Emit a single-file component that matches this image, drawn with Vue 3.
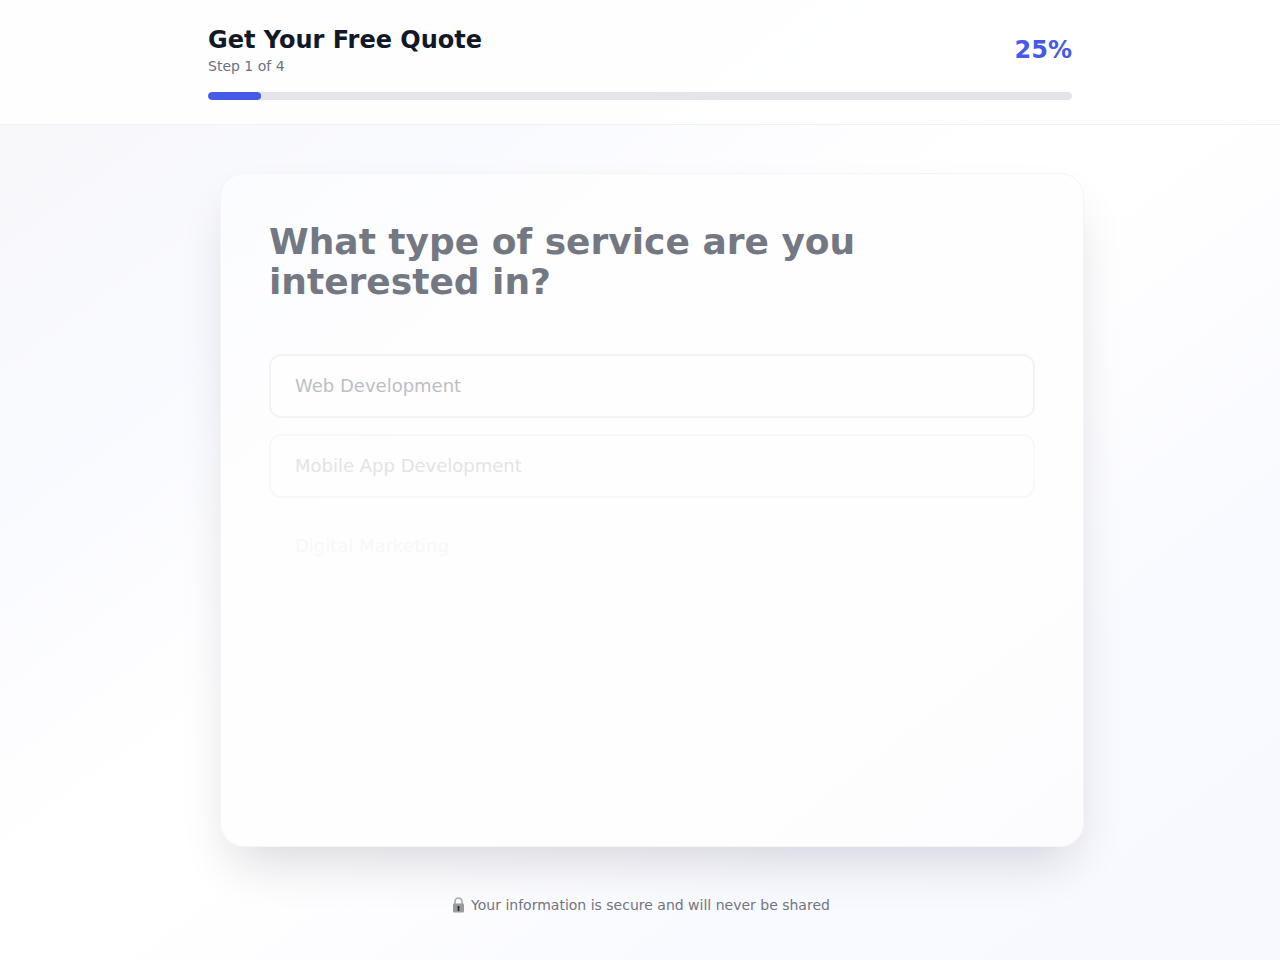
<script setup>
import { ref } from 'vue'

const step = ref(1)
const total = 4
const filled = ref(6.1)
const selected = ref('')

const options = [
  { label: 'Web Development', tone: 'near' },
  { label: 'Mobile App Development', tone: 'mid' },
  { label: 'Digital Marketing', tone: 'far' },
]
</script>

<template>
  <div class="page">
    <header class="header">
      <div class="column">
        <div class="header-row">
          <div>
            <h1 class="title">Get Your Free Quote</h1>
            <p class="step">Step {{ step }} of {{ total }}</p>
          </div>
          <div class="percent">{{ (step / total) * 100 }}%</div>
        </div>
        <div class="track" role="progressbar" aria-label="Quote progress" aria-valuemin="0" aria-valuemax="100" :aria-valuenow="(step / total) * 100">
          <div class="fill" :style="{ width: filled + '%' }"></div>
        </div>
      </div>
    </header>

    <main class="main">
      <section class="card">
        <h2 class="question">What type of service are you interested in?</h2>
        <div class="options">
          <button
            v-for="option in options"
            :key="option.label"
            type="button"
            class="option"
            :class="option.tone"
            :aria-pressed="selected === option.label"
            @click="selected = option.label"
          >{{ option.label }}</button>
        </div>
      </section>
    </main>

    <footer class="footer">
      <svg class="lock" viewBox="0 0 17 18" aria-hidden="true">
        <path d="M5 9V5.5a3.5 3.5 0 0 1 7 0V9" fill="none" stroke="#aaabad" stroke-width="1.7" />
        <rect x="3" y="7.5" width="11" height="9" rx="1" fill="#9b9b9d" />
        <path d="M3.5 10.5h10M3.5 13.5h10" stroke="#949597" stroke-width="0.6" />
        <path d="M8.5 10a1.2 1.2 0 0 1 .8 2.1v3H7.700v-3A1.2 1.2 0 0 1 8.500 10z" fill="#232b3c" />
      </svg>
      <span>Your information is secure and will never be shared</span>
    </footer>
  </div>
</template>

<style>
body {
  margin: 0;
}
</style>

<style scoped>
.page {
  box-sizing: border-box;
  min-height: 100vh;
  display: flex;
  flex-direction: column;
  font-family: "DejaVu Sans", sans-serif;
  background: linear-gradient(to bottom right, #f7f7f9 0%, #f9faff 26%, #ffffff 46%, #ffffff 53%, #f9faff 76%, #f8f9fe 100%);
}

.header {
  background: rgba(255, 255, 255, 0.8);
  border-bottom: 1px solid #f1f1f4;
  padding: 24px;
}

.column {
  max-width: 864px;
  margin: 0 auto;
}

.header-row {
  display: flex;
  align-items: center;
  justify-content: space-between;
  margin-bottom: 16px;
}

.title {
  margin: 0;
  font-size: 24px;
  line-height: 32px;
  font-weight: 700;
  color: #111827;
}

.step {
  margin: 0;
  font-size: 14px;
  line-height: 20px;
  color: #6b7280;
}

.percent {
  font-size: 24px;
  line-height: 32px;
  font-weight: 700;
  color: #465aea;
}

.track {
  height: 8px;
  border-radius: 4px;
  background: #e5e4ea;
  overflow: hidden;
}

.fill {
  height: 100%;
  border-radius: 4px;
  background: #465aea;
}

.main {
  box-sizing: border-box;
  width: 100%;
  max-width: 888px;
  margin: 0 auto;
  padding: 48px 0 48px 24px;
  flex: 1;
  display: flex;
}

.card {
  box-sizing: border-box;
  flex: 1;
  padding: 48px;
  border: 1px solid #f5f5f8;
  border-radius: 24px;
  background: linear-gradient(to bottom right, #fbfcff 0%, #fefefe 30%, #fefefe 75%, #fcfcff 100%);
  box-shadow: 0 25px 50px -12px rgba(20, 14, 35, 0.16);
}

.question {
  margin: 0 0 52px;
  font-size: 36px;
  line-height: 40px;
  font-weight: 700;
  color: #747882;
}

.options {
  display: flex;
  flex-direction: column;
  gap: 16px;
}

.option {
  box-sizing: border-box;
  width: 100%;
  padding: 16px 24px;
  border: 2px solid transparent;
  border-radius: 12px;
  background: transparent;
  font-family: inherit;
  font-size: 18px;
  line-height: 28px;
  text-align: left;
  cursor: pointer;
}

.near {
  color: #bbbfc7;
  border-color: #f3f3f6;
  background: #fefefe;
}

.mid {
  color: #e3e3e9;
  border-color: #f8f8fc;
  background: #fefefe;
}

.far {
  color: #f7f7fd;
}

.footer {
  display: flex;
  align-items: center;
  justify-content: center;
  gap: 4px;
  padding-bottom: 45px;
  font-size: 14px;
  line-height: 20px;
  color: #71757f;
}

.lock {
  width: 17px;
  height: 18px;
}
</style>
